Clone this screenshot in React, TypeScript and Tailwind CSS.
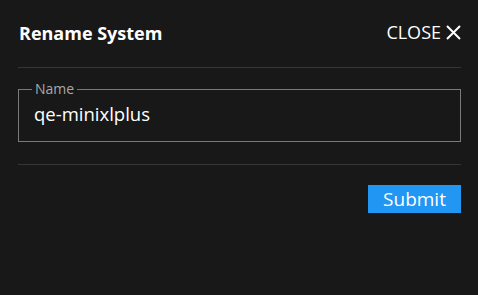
import React from "react";

export default function App() {
  return (
    <div
      className="w-[478px] h-[295px] bg-[#181818] text-white overflow-hidden"
      style={{ fontFamily: '"Open Sans", "Noto Sans", sans-serif' }}
    >
      <div className="pl-[18px] pr-[17px]">
        <div className="flex items-center justify-between h-[68px] border-b border-[#363636]">
          <div className="text-[18px] font-bold pl-[1px] mt-[-1px]">Rename System</div>
          <div className="flex items-center gap-[5px] mt-[-2px]">
            <span className="text-[18px]">CLOSE</span>
            <svg width="15" height="15" viewBox="0 0 15 15">
              <path d="M1 1 L14 14 M14 1 L1 14" stroke="white" strokeWidth="2" strokeLinecap="butt" />
            </svg>
          </div>
        </div>
        <fieldset className="mt-[13px] border border-[#7a7a7a] h-[61px] px-[12px] pb-[8px] m-0 min-w-0">
          <legend className="px-[3px] text-[14px] leading-[16px] text-[#a8a8a8] ml-[1px]">Name</legend>
          <div className="text-[18.5px] leading-[24px] text-white pl-[3px] mt-[5px]">qe-minixlplus</div>
        </fieldset>
        <div className="mt-[22px] border-t border-[#363636]" />
        <div className="flex justify-end mt-[20px]">
          <button className="w-[93px] h-[28px] bg-[#2196f3] text-white text-[19px] leading-[28px] flex items-center justify-center">
            Submit
          </button>
        </div>
      </div>
    </div>
  );
}
